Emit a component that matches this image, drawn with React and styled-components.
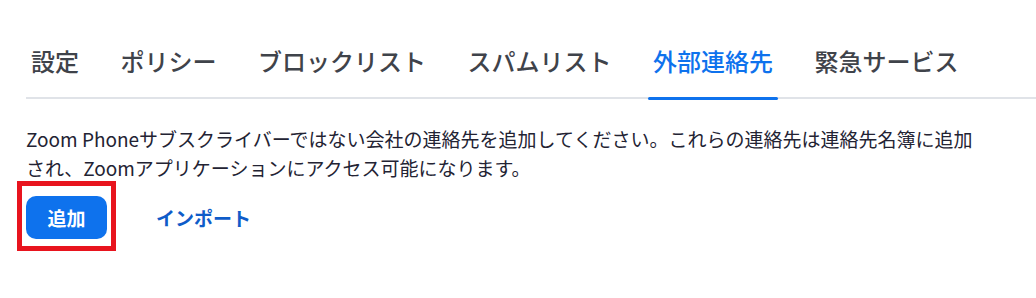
import React from "react";
import styled, { createGlobalStyle } from "styled-components";

const Global = createGlobalStyle`
  html, body { margin: 0; padding: 0; background: #ffffff; }
  body { font-family: "Noto Sans CJK JP", "Noto Sans", sans-serif; }
`;

const Page = styled.div`
  box-sizing: border-box;
  min-height: 298px;
  padding: 43px 0 40px 26px;
  width: 1036px;
`;

const Tabs = styled.nav`
  display: flex;
  gap: 31.5px;
  border-bottom: 2px solid #e0e3e8;
`;

const Tab = styled.div`
  position: relative;
  padding: 0 5px 18px;
  font-size: 24px;
  line-height: 36px;
  font-weight: 500;
  color: ${(p) => (p.$active ? "#0e72ed" : "#3f434a")};
  white-space: nowrap;
  &::after {
    content: "";
    display: ${(p) => (p.$active ? "block" : "none")};
    position: absolute;
    left: 0;
    right: 0;
    bottom: -3px;
    height: 3px;
    border-radius: 2px;
    background: #0e72ed;
  }
`;

const Description = styled.p`
  margin: 25px 0 0;
  max-width: 962px;
  font-size: 19px;
  line-height: 29px;
  color: #232333;
`;

const Actions = styled.div`
  display: flex;
  align-items: center;
  gap: 29px;
  margin-top: 14px;
`;

const Highlight = styled.div`
  position: relative;
  display: flex;
  &::before {
    content: "";
    position: absolute;
    left: -9px;
    top: -15px;
    width: 99px;
    height: 70px;
    box-sizing: border-box;
    border: 5px solid #e8141e;
    pointer-events: none;
    z-index: 1;
  }
`;

const PrimaryButton = styled.button`
  width: 81px;
  height: 43px;
  border: none;
  border-radius: 10px;
  background: #0e72ed;
  color: #ffffff;
  font-family: inherit;
  font-size: 19px;
  font-weight: 700;
  padding: 0;
  cursor: pointer;
`;

const LinkButton = styled.button`
  height: 43px;
  border: none;
  background: transparent;
  color: #0f5cc9;
  font-family: inherit;
  font-size: 19px;
  font-weight: 700;
  padding: 0 20px;
  cursor: pointer;
`;

const tabs = ["設定", "ポリシー", "ブロックリスト", "スパムリスト", "外部連絡先", "緊急サービス"];

export default function App() {
  return (
    <>
      <Global />
      <Page>
        <Tabs>
          {tabs.map((t) => (
            <Tab key={t} $active={t === "外部連絡先"}>
              {t}
            </Tab>
          ))}
        </Tabs>
        <Description>
          Zoom Phoneサブスクライバーではない会社の連絡先を追加してください。これらの連絡先は連絡先名簿に追加され、Zoomアプリケーションにアクセス可能になります。
        </Description>
        <Actions>
          <Highlight>
            <PrimaryButton>追加</PrimaryButton>
          </Highlight>
          <LinkButton>インポート</LinkButton>
        </Actions>
      </Page>
    </>
  );
}
